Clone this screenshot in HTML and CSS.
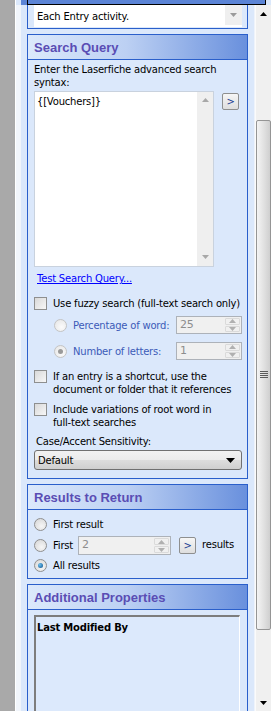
FILE: index.html
```
<!DOCTYPE html>
<html lang="en">
<head>
    <meta charset="UTF-8">
    <title>Search Query Properties</title>
    <link rel="stylesheet" href="styles.css">
</head>
<body>
    <div class="left-strip"></div>
    <div class="right">
        <div class="top-band"><div class="focus-box"></div></div>
        <div class="row">
            <div class="pane">
                <!-- group cut off at the top -->
                <div class="group group-cut">
                    <div class="group-body">
                        <div class="combo-cut">
                            <span>Each Entry activity.</span>
                            <div class="combo-btn">
                                <svg width="9" height="5" viewBox="0 0 9 5"><path d="M1 0h7L4.5 4z" fill="#9a9a9a"/></svg>
                            </div>
                        </div>
                    </div>
                </div>

                <div class="group">
                    <div class="group-head">Search Query</div>
                    <div class="group-body search-body">
                        <div class="label two-line">Enter the Laserfiche advanced search<br>syntax:</div>
                        <div class="query-row">
                            <div class="query-box">
                                <div class="query-text">{[Vouchers]}</div>
                                <div class="vscroll">
                                    <svg width="9" height="5" viewBox="0 0 9 5"><path d="M1 4h7L4.5 0z" fill="#a8a8a8"/></svg>
                                    <svg width="9" height="5" viewBox="0 0 9 5"><path d="M1 0h7L4.5 4z" fill="#a8a8a8"/></svg>
                                </div>
                            </div>
                            <div class="small-btn">&gt;</div>
                        </div>
                        <div class="link">Test Search Query...</div>

                        <div class="check-row fuzzy">
                            <span class="checkbox"></span>
                            <span class="nowrap">Use fuzzy search (full-text search only)</span>
                        </div>

                        <div class="spin-row first-spin">
                            <span class="radio disabled"></span>
                            <span class="dim">Percentage of word:</span>
                            <div class="spin">
                                <span class="spin-val">25</span>
                                <div class="spin-btns">
                                    <div><svg width="7" height="4" viewBox="0 0 7 4"><path d="M0 4h7L3.5 0z" fill="#b0b0b0"/></svg></div>
                                    <div><svg width="7" height="4" viewBox="0 0 7 4"><path d="M0 0h7L3.5 4z" fill="#b0b0b0"/></svg></div>
                                </div>
                            </div>
                        </div>
                        <div class="spin-row second-spin">
                            <span class="radio disabled checked-gray"></span>
                            <span class="dim">Number of letters:</span>
                            <div class="spin">
                                <span class="spin-val">1</span>
                                <div class="spin-btns">
                                    <div><svg width="7" height="4" viewBox="0 0 7 4"><path d="M0 4h7L3.5 0z" fill="#b0b0b0"/></svg></div>
                                    <div><svg width="7" height="4" viewBox="0 0 7 4"><path d="M0 0h7L3.5 4z" fill="#b0b0b0"/></svg></div>
                                </div>
                            </div>
                        </div>

                        <div class="check-row shortcut">
                            <span class="checkbox"></span>
                            <span class="two-line">If an entry is a shortcut, use the<br>document or folder that it references</span>
                        </div>
                        <div class="check-row variations">
                            <span class="checkbox"></span>
                            <span class="two-line">Include variations of root word in<br>full-text searches</span>
                        </div>

                        <div class="label case-label">Case/Accent Sensitivity:</div>
                        <div class="select">
                            <span>Default</span>
                            <svg width="9" height="5" viewBox="0 0 9 5"><path d="M0 0h9L4.5 5z" fill="#000"/></svg>
                        </div>
                    </div>
                </div>

                <div class="group results">
                    <div class="group-head">Results to Return</div>
                    <div class="group-body results-body">
                        <div class="radio-row">
                            <span class="radio"></span>
                            <span>First result</span>
                        </div>
                        <div class="radio-row first-n">
                            <span class="radio"></span>
                            <span class="first-label">First</span>
                            <div class="spin spin-wide">
                                <span class="spin-val">2</span>
                                <div class="spin-btns">
                                    <div><svg width="7" height="4" viewBox="0 0 7 4"><path d="M0 4h7L3.5 0z" fill="#b0b0b0"/></svg></div>
                                    <div><svg width="7" height="4" viewBox="0 0 7 4"><path d="M0 0h7L3.5 4z" fill="#b0b0b0"/></svg></div>
                                </div>
                            </div>
                            <div class="small-btn">&gt;</div>
                            <span class="results-word">results</span>
                        </div>
                        <div class="radio-row all">
                            <span class="radio checked"></span>
                            <span>All results</span>
                        </div>
                    </div>
                </div>

                <div class="group additional">
                    <div class="group-head">Additional Properties</div>
                    <div class="group-body">
                        <div class="prop-list">
                            <div class="prop-item">Last Modified By</div>
                        </div>
                    </div>
                </div>
            </div>

            <div class="scrollbar">
                <div class="arrow up"><svg width="7" height="4" viewBox="0 0 7 4"><path d="M0 4h7L3.5 0z" fill="#000"/></svg></div>
                <div class="track-top"></div>
                <div class="thumb">
                    <div class="grip"><i></i><i></i><i></i><i></i></div>
                </div>
                <div class="track-bottom"></div>
                <div class="arrow down"><svg width="7" height="4" viewBox="0 0 7 4"><path d="M0 0h7L3.5 4z" fill="#000"/></svg></div>
            </div>
        </div>
    </div>
</body>
</html>
```

FILE: styles.css
```
body {
    margin: 0;
    height: 711px;
    overflow: hidden;
    display: flex;
    font-family: "DejaVu Sans", Verdana, sans-serif;
    font-size: 10px;
    letter-spacing: -0.2px;
    color: #000;
    background: #dbe8fb;
}

.left-strip {
    width: 16px;
    background: #a9a9a9;
    border-right: 1px solid #fff;
}

.right {
    flex: 1;
    display: flex;
    flex-direction: column;
    min-height: 0;
}

/* focused header of the group above, cut by the window */
.top-band {
    flex: none;
    height: 5px;
    margin-left: 5px;
    margin-right: 5px;
    background: #5b84d6;
    box-sizing: border-box;
    padding-left: 6px;
}
.focus-box {
    height: 4px;
    border-left: 1px solid #000;
    border-right: 1px solid #000;
    border-bottom: 1px solid #000;
}

.row {
    flex: 1;
    display: flex;
    min-height: 0;
}

.pane {
    width: 233px;
    border-left: 5px solid #f1f5fb;
    border-right: 1px solid #eef3fb;
    display: flex;
    flex-direction: column;
    gap: 5px;
    overflow: hidden;
}

.group {
    flex: none;
    margin-left: 6px;
    width: 219px;
    border: 1px solid #2a5fcb;
    background: #dbe8fb;
}
.group-cut {
    border-top: 0;
}
.group-head {
    height: 24px;
    line-height: 25px;
    padding-left: 6px;
    border-bottom: 1px solid #2a5fcb;
    background: linear-gradient(to right, #dce9fb 0%, #bcd0f3 45%, #6990dd 100%);
    color: #5a4db4;
    font-family: "Liberation Sans", Arial, sans-serif;
    font-weight: bold;
    font-size: 13px;
    letter-spacing: 0;
}
.group-body {
    padding: 0 5px 0 6px;
}

.combo-cut {
    height: 22px;
    margin-bottom: 1px;
    background: #fff;
    display: flex;
    align-items: center;
    padding-left: 3px;
    width: 205px;
}
.combo-cut span { flex: 1; }
.combo-btn {
    width: 17px;
    height: 20px;
    background: #efefef;
    display: flex;
    justify-content: center;
    align-items: center;
    margin-top: -2px;
}

.label, .two-line, .check-row, .radio-row {
    line-height: 13px;
}
.nowrap, .dim { white-space: nowrap; }

.search-body {
    padding-top: 3px;
    padding-bottom: 8px;
}
.query-row {
    display: flex;
    margin-top: 2px;
}
.query-box {
    width: 178px;
    height: 174px;
    border: 1px solid #c9d2de;
    background: #fff;
    display: flex;
}
.query-text {
    flex: 1;
    padding: 3px 2px;
    line-height: 13px;
}
.vscroll {
    width: 16px;
    background: #efefef;
    display: flex;
    flex-direction: column;
    justify-content: space-between;
    align-items: center;
    padding: 6px 0;
}
.small-btn {
    width: 15px;
    height: 15px;
    border: 1px solid #8e8f8f;
    border-radius: 2px;
    background: linear-gradient(#f6f6f6, #dedede);
    font-size: 10px;
    line-height: 15px;
    text-align: center;
    color: #1c3f94;
}
.query-row .small-btn {
    margin-left: 8px;
    margin-top: 2px;
}
.link {
    margin-top: 5px;
    padding-left: 3px;
    line-height: 13px;
    color: #0000ff;
    text-decoration: underline;
}

.check-row {
    display: flex;
    gap: 6px;
}
.checkbox {
    flex: none;
    width: 11px;
    height: 11px;
    border: 1px solid #8e8f8f;
    background: linear-gradient(135deg, #d9d9d9, #f7f7f7);
}
.fuzzy { margin-top: 12px; }
.shortcut { margin-top: 10px; }
.variations { margin-top: 7px; }

.spin-row {
    display: flex;
    align-items: center;
    padding-left: 20px;
    height: 18px;
}
.first-spin { margin-top: 6px; }
.second-spin { margin-top: 8px; }
.spin-row .dim {
    margin-left: 6px;
    flex: 1;
    color: #3b5bb8;
}
.radio {
    flex: none;
    width: 11px;
    height: 11px;
    border: 1px solid #8f8f8f;
    border-radius: 50%;
    background: radial-gradient(circle at 60% 65%, #f6f6f6, #d4d4d4);
    position: relative;
}
.radio.disabled {
    border-color: #c4c4c4;
    background: radial-gradient(circle at 60% 65%, #fbfbfb, #e4e4e4);
}
.radio.checked-gray::after,
.radio.checked::after {
    content: "";
    position: absolute;
    left: 3px;
    top: 3px;
    width: 5px;
    height: 5px;
    border-radius: 50%;
    background: #9a9a9a;
}
.radio.checked::after {
    background: radial-gradient(circle at 35% 35%, #6fc2f0, #0a4f8c);
}

.spin {
    width: 64px;
    height: 16px;
    border: 1px solid #adb2b9;
    background: #f0f0f0;
    display: flex;
}
.spin-val {
    flex: 1;
    color: #8d8d8d;
    padding-left: 3px;
    line-height: 15px;
    font-size: 11px;
}
.spin-btns {
    width: 15px;
    display: flex;
    flex-direction: column;
    gap: 1px;
    padding: 1px 1px 1px 0;
}
.spin-btns div {
    flex: 1;
    border: 1px solid #dadada;
    border-radius: 1px;
    display: flex;
    align-items: center;
    justify-content: center;
}

.case-label { margin-top: 6px; padding-left: 2px; }
.select {
    margin-top: 2px;
    height: 18px;
    border: 1px solid #707070;
    border-radius: 3px;
    background: linear-gradient(#f2f2f2 0%, #ebebeb 50%, #dddddd 51%, #cfcfcf 100%);
    display: flex;
    align-items: center;
    justify-content: space-between;
    padding: 0 6px 0 3px;
    width: 197px;
}

.results-body {
    padding-top: 8px;
    padding-bottom: 6px;
}
.radio-row {
    display: flex;
    align-items: center;
    gap: 6px;
}
.first-n {
    margin-top: 5px;
    height: 19px;
}
.first-n .first-label { width: 19px; }
.spin-wide {
    width: 91px;
    height: 17px;
}
.first-n .small-btn { margin-left: 2px; }
.first-n .results-word { margin-top: -3px; }
.all { margin-top: 4px; }

.additional .group-body { padding-top: 5px; }
.prop-list {
    height: 120px;
    width: 203px;
    border-top: 2px solid #7d7d7d;
    border-left: 2px solid #7d7d7d;
    border-right: 1px solid #fff;
    background: #dce9fc;
}
.prop-item {
    font-weight: bold;
    padding: 4px 0 0 1px;
    line-height: 13px;
}

.scrollbar {
    width: 15px;
    background: #f0f0f0;
    border-left: 1px solid #fbfbfb;
    display: flex;
    flex-direction: column;
}
.arrow {
    flex: none;
    height: 17px;
    display: flex;
    align-items: center;
    justify-content: center;
}
.track-top { flex: none; height: 98px; }
.thumb {
    flex: none;
    height: 508px;
    border: 1px solid #959595;
    border-radius: 2px;
    background: linear-gradient(to right, #f4f4f4, #e2e2e2 50%, #cfcfcf);
    display: flex;
    align-items: center;
    justify-content: center;
}
.grip i {
    display: block;
    width: 8px;
    height: 1px;
    margin-bottom: 1px;
    background: #5a5a5a;
}
.track-bottom { flex: 1; }
```
